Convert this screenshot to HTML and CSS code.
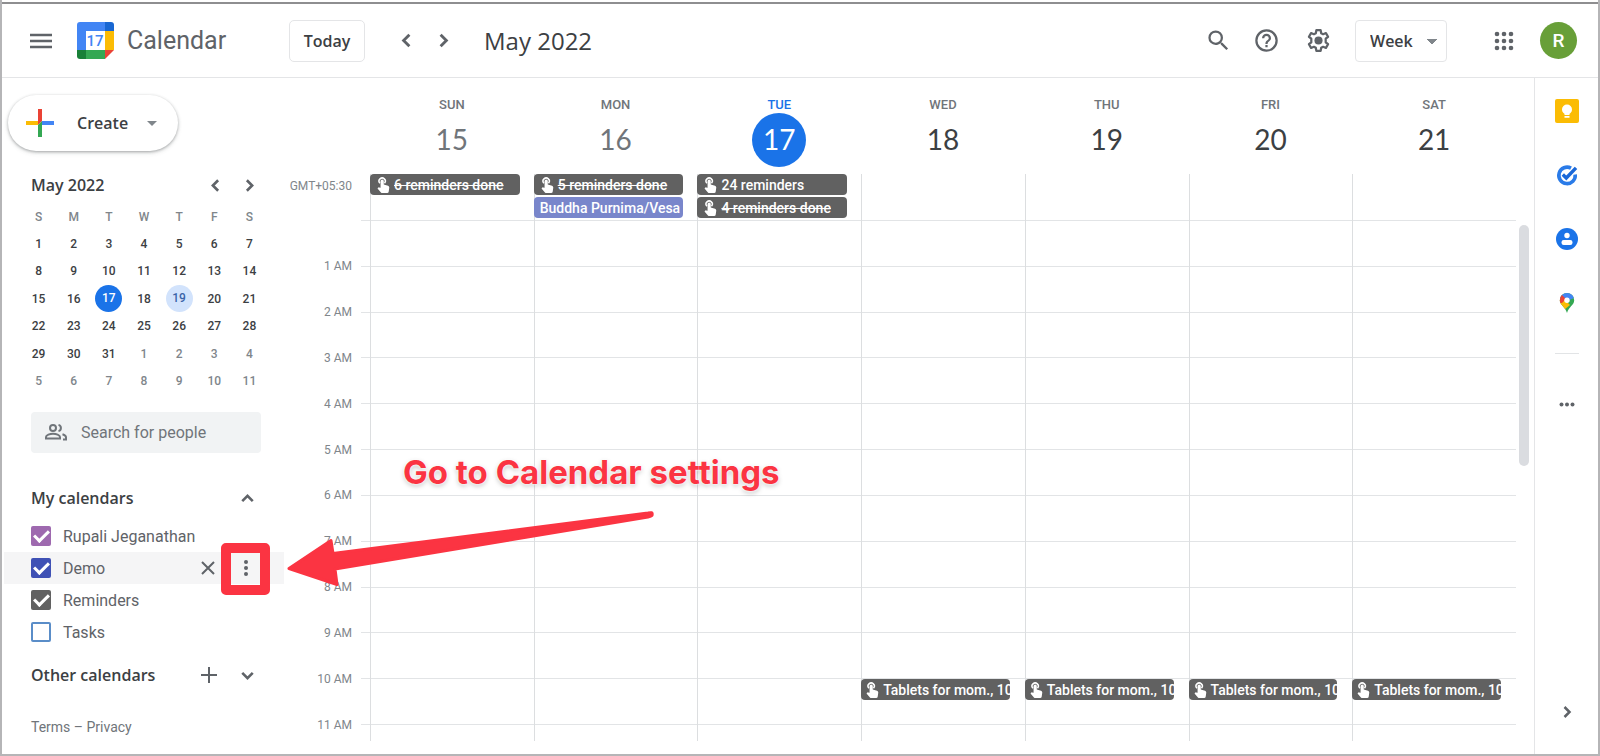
FILE: index.html
```html
<!DOCTYPE html>
<html lang="en">
<head>
<meta charset="utf-8">
<title>Calendar - May 2022</title>
<link rel="stylesheet" href="styles.css">
</head>
<body>
<svg class="sprite" aria-hidden="true">
  <symbol id="left" viewBox="0 0 24 24"><path d="M15 6l-6 6 6 6"/></symbol>
  <symbol id="right" viewBox="0 0 24 24"><path d="M9 6l6 6-6 6"/></symbol>
  <symbol id="up" viewBox="0 0 24 24"><path d="M6 15l6-6 6 6"/></symbol>
  <symbol id="down" viewBox="0 0 24 24"><path d="M6 9l6 6 6-6"/></symbol>
  <symbol id="hand" viewBox="0 0 14 18"><path d="M2.900 7A3.500 3.500 0 1 1 8.100 7" fill="none" stroke="#fff" stroke-width="1.700"/><path d="M3.700 4.600a1.800 1.800 0 0 1 3.600 0V8.300l4.800 1.500q1.500.5 1.400 2l-.6 4.400q-.2 1.800-1.900 1.800H5.600q-.9 0-1.500-.7L.3 12.900l.9-1q.4-.4 1-.2l1.500.5z" fill="#fff"/></symbol>
</svg>
<div class="app">
  <header class="top">
    <button class="icon-btn" aria-label="Main menu"><svg width="22" height="16" viewBox="0 0 22 16"><path d="M0 2h22M0 8h22M0 14h22" stroke="#5f6368" stroke-width="2.500"/></svg></button>
    <svg class="logo" width="37" height="37" viewBox="0 0 37 37" role="img" aria-label="Calendar logo">
      <path d="M3 0h25v9H9v19H0V3q0-3 3-3z" fill="#4285f4"/><path d="M28 0h6q3 0 3 3v6h-9z" fill="#1967d2"/><path d="M28 9h9v19h-9z" fill="#fbbc04"/><path d="M9 28h19v9H9z" fill="#34a853"/><path d="M0 28h9v9H3q-3 0-3-3z" fill="#188038"/><path d="M28 28h9l-9 9z" fill="#ea4335"/><path d="M9 9h19v19H9z" fill="#fff"/>
      <text x="18" y="24" text-anchor="middle" class="logo-num">17</text>
    </svg>
    <span class="brand">Calendar</span>
    <button class="today">Today</button>
    <button class="icon-btn nav" aria-label="Previous week"><svg class="chev" width="23" height="23"><use href="#left"/></svg></button>
    <button class="icon-btn nav" aria-label="Next week"><svg class="chev" width="23" height="23"><use href="#right"/></svg></button>
    <h1>May 2022</h1>
    <div class="tools">
      <button class="icon-btn find" aria-label="Search"><svg width="27" height="27" viewBox="0 0 24 24"><path d="M15.500 14h-.79l-.28-.27A6.470 6.470 0 0 0 16 9.500 6.500 6.500 0 1 0 9.500 16c1.610 0 3.090-.59 4.230-1.570l.27.28v.79l5 4.990L20.490 19l-4.990-5zm-6 0a4.500 4.500 0 1 1 0-9 4.500 4.500 0 0 1 0 9z" fill="#5f6368"/></svg></button>
      <button class="icon-btn" aria-label="Help"><svg width="27" height="27" viewBox="0 0 24 24"><path d="M11 18h2v-2h-2v2zm1-16a10 10 0 1 0 0 20 10 10 0 0 0 0-20zm0 18a8 8 0 1 1 0-16 8 8 0 0 1 0 16zm0-14a4 4 0 0 0-4 4h2a2 2 0 1 1 4 0c0 2-3 1.750-3 5h2c0-2.250 3-2.500 3-5a4 4 0 0 0-4-4z" fill="#5f6368"/></svg></button>
      <button class="icon-btn" aria-label="Settings"><svg width="27" height="27" viewBox="0 0 24 24"><path d="M10.100 2.800h3.800l.5 2.700 1.700.9 2.500-1 1.900 3.300-2.100 1.700v3.200l2.100 1.700-1.900 3.300-2.500-1-1.700.9-.5 2.700h-3.800l-.5-2.700-1.700-.9-2.500 1-1.900-3.300 2.100-1.700v-3.200L3.500 8.700l1.900-3.300 2.500 1 1.700-.9z" fill="none" stroke="#5f6368" stroke-width="2" stroke-linejoin="round"/><circle cx="12" cy="12" r="3.600" fill="#5f6368"/></svg></button>
      <select class="view" aria-label="View"><option>Week</option></select>
      <button class="icon-btn apps" aria-label="Apps"><svg width="20" height="20" viewBox="0 0 20 20" fill="#5f6368"><circle cx="3" cy="3" r="2.300"/><circle cx="10" cy="3" r="2.300"/><circle cx="17" cy="3" r="2.300"/><circle cx="3" cy="10" r="2.300"/><circle cx="10" cy="10" r="2.300"/><circle cx="17" cy="10" r="2.300"/><circle cx="3" cy="17" r="2.300"/><circle cx="10" cy="17" r="2.300"/><circle cx="17" cy="17" r="2.300"/></svg></button>
      <button class="avatar">R</button>
    </div>
  </header>
  <div class="main">
    <aside class="side">
      <button class="create"><svg width="28" height="28" viewBox="0 0 28 28"><path d="M12 0h4v12l-4 4z" fill="#ea4335"/><path d="M16 12h12v4H16z" fill="#4285f4"/><path d="M12 16l4-4v16h-4z" fill="#34a853"/><path d="M0 12h12v4H0z" fill="#fbbc04"/></svg><span>Create</span><i class="caret"></i></button>
      <div class="mini-head"><h2>May 2022</h2><button class="icon-btn" aria-label="Previous month"><svg class="chev" width="21" height="21"><use href="#left"/></svg></button><button class="icon-btn" aria-label="Next month"><svg class="chev" width="21" height="21"><use href="#right"/></svg></button></div>
      <table class="mini">
        <thead><tr><th>S</th><th>M</th><th>T</th><th>W</th><th>T</th><th>F</th><th>S</th></tr></thead>
        <tbody>
        <tr><td>1</td><td>2</td><td>3</td><td>4</td><td>5</td><td>6</td><td>7</td></tr>
        <tr><td>8</td><td>9</td><td>10</td><td>11</td><td>12</td><td>13</td><td>14</td></tr>
        <tr><td>15</td><td>16</td><td><span class="dot now">17</span></td><td>18</td><td><span class="dot sel">19</span></td><td>20</td><td>21</td></tr>
        <tr><td>22</td><td>23</td><td>24</td><td>25</td><td>26</td><td>27</td><td>28</td></tr>
        <tr><td>29</td><td>30</td><td>31</td><td class="out">1</td><td class="out">2</td><td class="out">3</td><td class="out">4</td></tr>
        <tr class="out"><td>5</td><td>6</td><td>7</td><td>8</td><td>9</td><td>10</td><td>11</td></tr>
        </tbody>
      </table>
      <label class="people"><svg width="24" height="24" viewBox="0 0 24 24" fill="none" stroke="#70757a" stroke-width="2"><circle cx="9" cy="7" r="3"/><path d="M2 17.500v-1.500c0-2 4-3.300 7-3.300s7 1.300 7 3.300v1.500z"/><path d="M14.500 3.900a3.200 3.200 0 0 1 0 6.200M18.500 13.200c2.300.7 3.500 1.600 3.500 3v2.300h-3"/></svg><input type="text" placeholder="Search for people" aria-label="Search for people"></label>
      <div class="sec"><h2>My calendars</h2><button class="icon-btn" aria-label="Collapse"><svg class="chev" width="21" height="21"><use href="#up"/></svg></button></div>
      <ul class="cals">
        <li><label><input type="checkbox" class="purple" checked>Rupali Jeganathan</label></li>
        <li class="hover"><label><input type="checkbox" class="blue" checked>Demo</label>
          <button class="icon-btn x" aria-label="Hide"><svg width="14" height="14" viewBox="0 0 14 14"><path d="M1 1l12 12M13 1L1 13" stroke="#5f6368" stroke-width="2"/></svg></button>
          <button class="icon-btn more" aria-label="Options"><svg width="6" height="16" viewBox="0 0 6 16" fill="#5f6368"><circle cx="3" cy="2" r="2"/><circle cx="3" cy="8" r="2"/><circle cx="3" cy="14" r="2"/></svg></button></li>
        <li><label><input type="checkbox" class="grey" checked>Reminders</label></li>
        <li><label><input type="checkbox" class="open">Tasks</label></li>
      </ul>
      <div class="sec other"><h2>Other calendars</h2><button class="icon-btn" aria-label="Add"><svg width="16" height="16" viewBox="0 0 16 16"><path d="M8 0v16M0 8h16" stroke="#5f6368" stroke-width="2"/></svg></button><button class="icon-btn" aria-label="Expand"><svg class="chev" width="21" height="21"><use href="#down"/></svg></button></div>
      <p class="legal"><a href="#terms">Terms</a> – <a href="#privacy">Privacy</a></p>
    </aside>
    <main class="week">
      <div class="days">
        <div class="day past"><span>SUN</span><b>15</b></div><div class="day past"><span>MON</span><b>16</b></div><div class="day today-col"><span>TUE</span><b>17</b></div><div class="day"><span>WED</span><b>18</b></div><div class="day"><span>THU</span><b>19</b></div><div class="day"><span>FRI</span><b>20</b></div><div class="day"><span>SAT</span><b>21</b></div>
      </div>
      <div class="allday">
        <span class="gmt">GMT+05:30</span>
        <div class="cell"><div class="chip"><svg><use href="#hand"/></svg><s>6 reminders done</s></div></div>
        <div class="cell"><div class="chip"><svg><use href="#hand"/></svg><s>5 reminders done</s></div><div class="chip holiday">Buddha Purnima/Vesa</div></div>
        <div class="cell"><div class="chip"><svg><use href="#hand"/></svg>24 reminders</div><div class="chip"><svg><use href="#hand"/></svg><s>4 reminders done</s></div></div>
        <div class="cell"></div><div class="cell"></div><div class="cell"></div><div class="cell"></div>
      </div>
      <div class="scroll">
        <div class="hours"><span>1 AM</span><span>2 AM</span><span>3 AM</span><span>4 AM</span><span>5 AM</span><span>6 AM</span><span>7 AM</span><span>8 AM</span><span>9 AM</span><span>10 AM</span><span>11 AM</span></div>
        <div class="ticks"><i></i><i></i><i></i><i></i><i></i><i></i><i></i><i></i><i></i><i></i><i></i></div>
        <div class="col"></div><div class="col"></div><div class="col"></div>
        <div class="col"><div class="chip"><svg><use href="#hand"/></svg>Tablets for mom., 10</div></div>
        <div class="col"><div class="chip"><svg><use href="#hand"/></svg>Tablets for mom., 10</div></div>
        <div class="col"><div class="chip"><svg><use href="#hand"/></svg>Tablets for mom., 10</div></div>
        <div class="col"><div class="chip"><svg><use href="#hand"/></svg>Tablets for mom., 10</div></div>
      </div>
      <div class="bar"></div>
    </main>
    <aside class="panel">
      <button class="icon-btn" aria-label="Keep"><svg width="24" height="24" viewBox="0 0 24 24"><rect width="24" height="24" rx="2" fill="#fbbc04"/><circle cx="12" cy="10.500" r="5" fill="#fff"/><path d="M9.500 14h5v2h-5zM9.500 17h5v1.800h-5z" fill="#fff"/></svg></button>
      <button class="icon-btn" aria-label="Tasks"><svg width="24" height="24" viewBox="0 0 24 24"><path d="M16 5.200A8.200 8.200 0 1 0 20.200 11.500" fill="none" stroke="#2a7be8" stroke-width="3.600"/><path d="M7.800 11.500l3.500 3.500L21 4.800" fill="none" stroke="#1a68d8" stroke-width="3.400"/></svg></button>
      <button class="icon-btn" aria-label="Contacts"><svg width="24" height="24" viewBox="0 0 24 24"><circle cx="12" cy="12" r="11" fill="#1a73e8"/><circle cx="12" cy="8.500" r="2.700" fill="#fff"/><rect x="6.500" y="13" width="11" height="5" rx="2.200" fill="#fff"/></svg></button>
      <button class="icon-btn" aria-label="Maps"><svg width="24" height="24" viewBox="0 0 24 24"><clipPath id="pin"><path d="M12 2a7.200 7.200 0 0 0-7.200 7.200c0 5 5.400 6.300 7.200 12.800 1.800-6.500 7.200-7.800 7.200-12.800A7.200 7.200 0 0 0 12 2z"/></clipPath><g clip-path="url(#pin)"><path d="M0 0h24v24H0z" fill="#34a853"/><path d="M4 10l4-3 7 7-6 5z" fill="#fbbc04"/><path d="M4 6l4-6h12l-1 7-7 3-3-1z" fill="#4285f4"/><path d="M3 4h4l4 4-4 4H3z" fill="#ea4335"/></g><circle cx="12" cy="9.200" r="2.700" fill="#fff"/></svg></button>
      <hr>
      <button class="icon-btn dots" aria-label="More"><svg width="16" height="5" viewBox="0 0 16 5" fill="#5f6368"><circle cx="2.500" cy="2.500" r="2"/><circle cx="8" cy="2.500" r="2"/><circle cx="13.500" cy="2.500" r="2"/></svg></button>
      <button class="icon-btn hide" aria-label="Hide panel"><svg class="chev" width="20" height="20"><use href="#right"/></svg></button>
    </aside>
  </div>
  <div class="mark-box"></div>
  <svg class="mark-arrow" width="368" height="78" viewBox="0 0 368 78"><path d="M3 59.500L45 31.500L47 44.500L362 4Q367 3 366 5Q367 7 362 8L49 60L51 75.500Z" fill="#fb3442" stroke="#fb3442" stroke-width="3" stroke-linejoin="round"/></svg>
  <p class="mark-text">Go to Calendar settings</p>
</div>
</body>
</html>
```
FILE: styles.css
```css
* { box-sizing: border-box; }
body { margin: 0; font-family: Roboto, "Liberation Sans", sans-serif; color: #3c4043; background: #fff; }
h1, h2, p, ul { margin: 0; padding: 0; }
button, select, input { font: inherit; color: inherit; }
.sprite { position: absolute; width: 0; height: 0; }
.app { position: relative; display: flex; flex-direction: column; min-height: 100vh; border: 2px solid #b5b5b7; border-top: 0; }
.app::before { content: ""; height: 2px; border-top: 2px solid #fff; background: #8e8e90; flex: none; }
.icon-btn { display: flex; align-items: center; justify-content: center; flex: none; border: 0; background: none; padding: 0; }
.chev { fill: none; stroke: #5f6368; stroke-width: 3; }

.top { display: flex; align-items: center; height: 74px; padding: 0 21px 0 28px; border-bottom: 1px solid #e4e5e7; }
.logo { margin-left: 25px; }
.logo-num { font: 500 15px Roboto, sans-serif; fill: #4285f4; }
.brand { margin-left: 13px; width: 162px; font-size: 25px; color: #5f6368; }
.today { width: 76px; height: 42px; border: 1px solid #e4e5e7; border-radius: 5px; background: none; font: 600 16px "Open Sans", sans-serif; padding: 0; margin-right: 23px; }
.nav { width: 37px; height: 37px; }
h1 { margin-left: 22px; font: 400 24px "Open Sans", sans-serif; }
.tools { margin-left: auto; display: flex; align-items: center; gap: 25px; }
.find { margin-right: -4px; }
.view { appearance: none; width: 92px; height: 42px; margin-left: -2px; padding: 0 14px; border: 1px solid #e4e5e7; border-radius: 4px; font: 600 16px "Open Sans", sans-serif;
  background: linear-gradient(to bottom right, #80868b 50%, transparent 51%) 76px 18px / 5px 5px no-repeat, linear-gradient(to bottom left, #80868b 50%, transparent 51%) 71px 18px / 5px 5px no-repeat, #fff; }
.apps { margin-left: 22px; }
.avatar { width: 37px; height: 37px; margin-left: 1px; border: 0; border-radius: 50%; background: #689f38; color: #fff; font-size: 19px; font-weight: 500; padding: 0; }

.main { display: flex; flex: 1; }
.side { width: 282px; flex: none; padding: 17px 0 0 2px; }
.create { display: flex; align-items: center; width: 170px; height: 56px; margin-left: 4px; padding: 0 0 0 18px; border: 0; border-radius: 28px; background: #fff; box-shadow: 0 1px 3px rgba(60,64,67,.4), 0 2px 5px rgba(60,64,67,.12); font: 600 16px "Open Sans", sans-serif; }
.create span { margin-left: 23px; width: 70px; text-align: left; }
.caret { border: 5px solid transparent; border-top-color: #80868b; border-bottom: 0; }
h2 { flex: 1; font: 600 16px "Open Sans", sans-serif; }
.mini-head, .sec { display: flex; align-items: center; height: 34px; padding: 0 24px 0 27px; gap: 13px; }
.mini-head { margin-top: 17px; }
.mini { width: 246px; height: 192px; margin: 1px 0 0 17px; border-collapse: collapse; table-layout: fixed; font-size: 12px; font-weight: 500; text-align: center; }
.mini th, .mini td { padding: 0; height: 27px; }
.mini th { font-weight: 500; color: #80868b; }
.mini .out { color: #80868b; }
.dot { display: block; width: 27px; height: 27px; margin: 0 auto; line-height: 27px; border-radius: 50%; }
.now { background: #1a73e8; color: #fff; }
.sel { background: #d2e3fc; color: #3b64a8; }
.people { display: flex; align-items: center; height: 41px; margin: 17px 23px 0 27px; padding-left: 13px; gap: 13px; border-radius: 4px; background: #f1f3f4; }
.people input { flex: 1; min-width: 0; border: 0; padding: 0; background: none; font-size: 16px; outline: 0; }
.people input::placeholder { color: #70757a; opacity: 1; }
.sec { margin-top: 28px; padding-right: 26px; }
.cals { list-style: none; margin-top: 5px; }
.cals li { display: flex; align-items: center; height: 32px; padding-left: 27px; font-size: 16px; color: #5f6368; }
.cals .hover { background: #f5f5f6; }
.cals label { display: flex; align-items: center; gap: 12px; flex: 1; }
.cals input { appearance: none; width: 20px; height: 20px; margin: 0; border-radius: 2px; }
.cals input:checked::after { content: ""; box-sizing: border-box; display: block; width: 9px; height: 15px; margin: 1px auto; border: solid #fff; border-width: 0 3px 3px 0; transform: rotate(45deg); }
.purple { background: #9e69af; }
.blue { background: #3f51b5; }
.grey { background: #616161; }
.open { border: 2px solid #5a8dc8; }
.x { margin-right: 25px; }
.more { width: 11px; margin-right: 33px; }
.other { margin-top: 10px; gap: 20px; }
.legal { padding: 27px 0 0 27px; font-size: 14px; color: #70757a; }
.legal a { color: inherit; text-decoration: none; }

.week { position: relative; flex: 1; min-width: 0; display: flex; flex-direction: column; padding: 0 18px 13px 0; }
.days, .allday, .scroll { display: grid; grid-template-columns: 76px 10px repeat(7, minmax(0, 1fr)); }
.days { height: 96px; padding-top: 19px; }
.day:first-child { grid-column: 3; }
.day { display: flex; flex-direction: column; align-items: center; font-size: 13px; font-weight: 500; color: #70757a; }
.day span { line-height: 16px; }
.day b { width: 54px; height: 54px; border-radius: 50%; text-align: center; font: 400 28px/52px Lato, sans-serif; color: #3c4043; }
.day.past b { color: #70757a; }
.day.today-col { color: #1a73e8; }
.day.today-col b { background: #1a73e8; color: #fff; }
.allday { height: 46px; }
.gmt { grid-column: 1 / 3; padding-right: 18px; font-size: 12px; line-height: 24px; text-align: right; color: #80868b; white-space: nowrap; }
.cell, .col { border-left: 1px solid #dcdee0; }
.cell { display: flex; flex-direction: column; gap: 2px; }
.chip { display: flex; align-items: center; height: 21px; margin: 0 14px 0 -1px; padding-left: 7px; gap: 4px; border-radius: 4px; background: #616161; color: #fff; font-size: 14px; font-weight: 500; white-space: nowrap; overflow: hidden; }
.chip svg { width: 13px; height: 16px; flex: none; }
.holiday { background: #7986cb; padding-left: 6px; }
.scroll { flex: 1; position: relative; }
.hours, .ticks { display: grid; grid-template-rows: repeat(11, 1fr); padding-bottom: 16px; }
.hours { font-size: 12px; color: #80868b; text-align: right; padding-right: 8px; line-height: 12px; }
.hours span { align-self: end; margin-bottom: -6px; }
.ticks { position: absolute; inset: 0 0 0 77px; border-top: 1px solid #e2e4e6; }
.ticks i { border-bottom: 1px solid #e2e4e6; }
.col { position: relative; display: grid; grid-template-rows: repeat(11, 1fr); padding-bottom: 16px; }
.col:nth-of-type(3) { grid-column: 3; }
.col .chip { grid-row: 11; margin-right: 15px; padding-left: 5px; }
.bar { position: absolute; right: 5px; top: 147px; width: 10px; height: 241px; border-radius: 5px; background: #dadce0; }

.panel { width: 64px; flex: none; display: flex; flex-direction: column; align-items: center; gap: 40px; padding: 21px 0 32px; border-left: 1px solid #e4e5e7; }
.panel hr { width: 24px; margin: -2px 0; border: 0; border-top: 1px solid #e2e4e6; }
.dots { margin-top: 10px; }
.hide { margin-top: auto; }

.mark-box { position: absolute; left: 219px; top: 543px; width: 49px; height: 52px; border: 10px solid #fb3442; border-radius: 5px; }
.mark-arrow { position: absolute; left: 284px; top: 509px; }
.mark-text { position: absolute; left: 401px; top: 452px; font: 700 33px/40px Inter, sans-serif; color: #fb3442; text-shadow: 0 0 2px #fff, 0 0 3px #fff, 0 2px 5px rgba(0,0,0,.25); white-space: nowrap; }
```
